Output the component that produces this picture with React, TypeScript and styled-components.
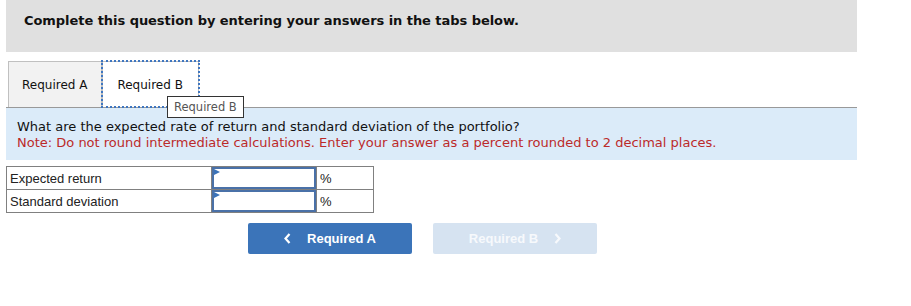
import React from "react";
import styled, { createGlobalStyle } from "styled-components";

const GlobalStyle = createGlobalStyle`
  html, body { margin: 0; padding: 0; background: #fff; }
  body { font-family: "DejaVu Sans", Verdana, sans-serif; }
`;

const Page = styled.div`
  width: 911px;
  padding-left: 6px;
  box-sizing: border-box;
`;

const Instructions = styled.div`
  width: 851px;
  height: 52px;
  background: #e0e0e0;
  box-sizing: border-box;
  padding: 13px 0 0 18px;
  font-size: 13px;
  font-weight: bold;
  color: #111;
  letter-spacing: -0.05px;
`;

const TabBar = styled.div`
  position: relative;
  display: flex;
  margin: 9px 0 0 2px;
  height: 46px;
`;

const Tab = styled.div<{ $active?: boolean }>`
  display: flex;
  align-items: center;
  box-sizing: border-box;
  height: 46px;
  padding: 0 ${(p) => (p.$active ? "15px" : "14px")} 0 ${(p) => (p.$active ? "14px" : "13px")};
  background: ${(p) => (p.$active ? "#fff" : "#f2f2f2")};
  border: 1px solid #c0c0c0;
  border-bottom: none;
  font-size: 12px;
  color: #111;
  outline: ${(p) => (p.$active ? "2px dotted #3f76c0" : "none")};
  outline-offset: -1px;
`;

const Tooltip = styled.div`
  position: absolute;
  left: 159px;
  top: 35px;
  height: 20px;
  padding: 0 6px;
  display: flex;
  align-items: center;
  background: #fff;
  border: 1px solid #333;
  font-size: 11.5px;
  color: #555;
  z-index: 2;
`;

const QuestionPanel = styled.div`
  width: 851px;
  box-sizing: border-box;
  background: #dbebf9;
  border-top: 1px solid #999;
  padding: 11px 0 9px 11px;
  font-size: 13px;
  line-height: 16px;
`;

const Question = styled.div`
  color: #111;
`;

const Note = styled.div`
  color: #bb2a2a;
`;

const AnswerTable = styled.table`
  margin-top: 6px;
  border-collapse: collapse;
  font-family: "Liberation Sans", Arial, sans-serif;
  font-size: 13px;
  color: #222;
`;

const Cell = styled.td<{ $w: number }>`
  width: ${(p) => p.$w}px;
  height: 22px;
  padding: 0;
  border: 1px solid #808080;
  box-sizing: border-box;
`;

const LabelCell = styled(Cell)`
  padding-left: 3px;
`;

const UnitCell = styled(Cell)`
  padding-left: 3px;
`;

const InputBox = styled.div`
  position: relative;
  height: 22px;
  box-sizing: border-box;
  border: 2px solid #4a71a8;
  background: #fff;
  &::before {
    content: "";
    position: absolute;
    left: 0;
    top: 0;
    border-style: solid;
    border-width: 3px 0 3px 6px;
    border-color: transparent transparent transparent #3b73b9;
  }
`;

const Buttons = styled.div`
  display: flex;
  gap: 21px;
  margin: 10px 0 0 242px;
`;

const NavButton = styled.button<{ $disabled?: boolean }>`
  display: flex;
  align-items: center;
  justify-content: center;
  gap: 16px;
  width: 164px;
  height: 31px;
  border: none;
  border-radius: 2px;
  background: ${(p) => (p.$disabled ? "#d6e3f1" : "#3b74b9")};
  color: ${(p) => (p.$disabled ? "#f7f9fc" : "#fff")};
  font-family: "Liberation Sans", Arial, sans-serif;
  font-weight: bold;
  font-size: 13px;
  padding: 0;
  cursor: pointer;
`;

const Chevron = ({ dir }: { dir: "left" | "right" }) => (
  <svg width="7" height="11" viewBox="0 0 7 11">
    <path
      d={dir === "left" ? "M5.5 1 L1.5 5.5 L5.5 10" : "M1.5 1 L5.5 5.5 L1.5 10"}
      fill="none"
      stroke="currentColor"
      strokeWidth="2.2"
    />
  </svg>
);

const rows = [
  { label: "Expected return" },
  { label: "Standard deviation" },
];

export default function App() {
  return (
    <Page>
      <GlobalStyle />
      <Instructions>Complete this question by entering your answers in the tabs below.</Instructions>
      <TabBar>
        <Tab>Required A</Tab>
        <Tab $active>Required B</Tab>
        <Tooltip>Required B</Tooltip>
      </TabBar>
      <QuestionPanel>
        <Question>What are the expected rate of return and standard deviation of the portfolio?</Question>
        <Note>
          Note: Do not round intermediate calculations. Enter your answer as a percent rounded to 2 decimal places.
        </Note>
      </QuestionPanel>
      <AnswerTable>
        <tbody>
          {rows.map((r) => (
            <tr key={r.label}>
              <LabelCell $w={205}>{r.label}</LabelCell>
              <Cell $w={105}>
                <InputBox />
              </Cell>
              <UnitCell $w={57}>%</UnitCell>
            </tr>
          ))}
        </tbody>
      </AnswerTable>
      <Buttons>
        <NavButton>
          <Chevron dir="left" />
          Required A
        </NavButton>
        <NavButton $disabled>
          Required B
          <Chevron dir="right" />
        </NavButton>
      </Buttons>
    </Page>
  );
}
